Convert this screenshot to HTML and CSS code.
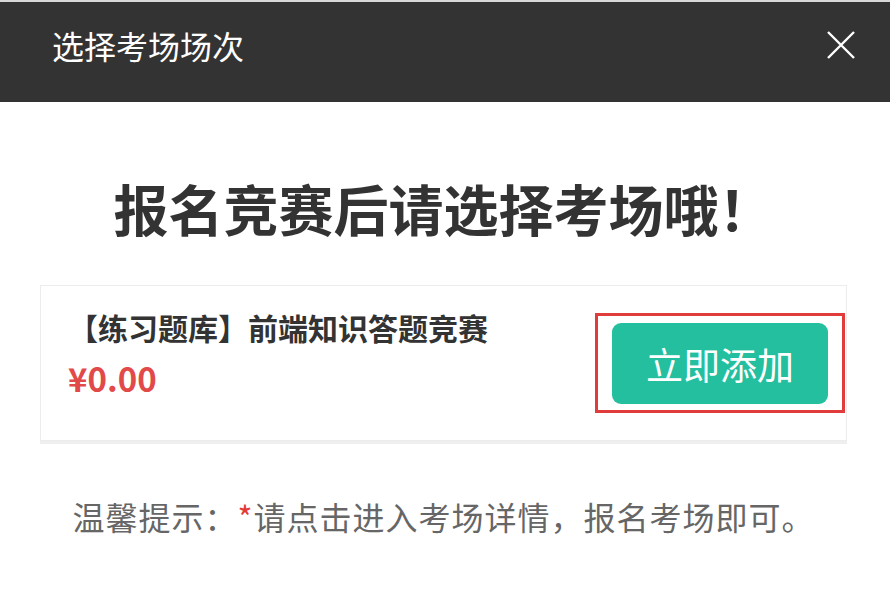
FILE: index.html
```html
<!DOCTYPE html>
<html lang="zh-CN">
  <head>
    <meta charset="UTF-8" />
    <meta name="viewport" content="width=device-width, initial-scale=1.0" />
    <title>选择考场场次</title>
    <link rel="stylesheet" href="styles.css">
  </head>
  <body>
    <div class="dialog">
      <div class="header">
        <span class="title">选择考场场次</span>
        <svg class="close" width="30" height="30" viewBox="0 0 30 30">
          <path d="M2 2 L28 28 M28 2 L2 28" stroke="#fff" stroke-width="2.4" fill="none" />
        </svg>
      </div>
      <div class="content">
        <h1>报名竞赛后请选择考场哦！</h1>
        <div class="card">
          <div class="info">
            <div class="name">【练习题库】前端知识答题竞赛</div>
            <div class="price">¥0.00</div>
          </div>
          <div class="mark">
            <button class="add">立即添加</button>
          </div>
        </div>
        <p class="tip">温馨提示：<span class="star">*</span>请点击进入考场详情，报名考场即可。</p>
      </div>
    </div>
  </body>
</html>
```

FILE: styles.css
```css
body {
  margin: 0;
  padding: 0;
  background: #fff;
  font-family: "Noto Sans CJK SC", "Noto Sans", sans-serif;
}
.dialog {
  width: 890px;
  height: 590px;
  border-top: 2px solid #d8d8d8;
  box-sizing: border-box;
}
.header {
  height: 100px;
  background-color: #333;
  display: flex;
  align-items: center;
  justify-content: space-between;
  padding: 0 34px 0 52px;
}
.title {
  color: #fff;
  font-size: 32px;
  margin-top: -14px;
}
.close {
  margin-top: -14px;
}
.content {
  display: flex;
  flex-direction: column;
  align-items: center;
  padding: 0 43px 0 40px;
}
h1 {
  margin: 70px 0 0;
  font-size: 55px;
  line-height: 70px;
  font-weight: 700;
  color: #333;
}
.card {
  margin-top: 43px;
  width: 807px;
  height: 156px;
  box-sizing: border-box;
  border: 1px solid #ececec;
  box-shadow: 0 3px 0 #efefef;
  display: flex;
  align-items: flex-start;
  justify-content: space-between;
  padding: 21px 1px 0 27px;
}
.name {
  font-size: 30px;
  font-weight: 700;
  color: #333;
  line-height: 40px;
}
.price {
  margin-top: 12px;
  color: #e24a4a;
  font-size: 33px;
  font-weight: 700;
  line-height: 38px;
}
.mark {
  border: 3px solid #e03c3c;
  padding: 7px 14px 6px 14px;
  margin-top: 6px;
}
.add {
  width: 216px;
  height: 81px;
  border: none;
  border-radius: 9px;
  background-color: #24bf9f;
  color: #fff;
  font-family: inherit;
  font-size: 37px;
  cursor: pointer;
}
.tip {
  margin: 52px 0 0;
  font-size: 32px;
  color: #666;
  letter-spacing: 1px;
}
.star {
  color: #e53935;
}
```
